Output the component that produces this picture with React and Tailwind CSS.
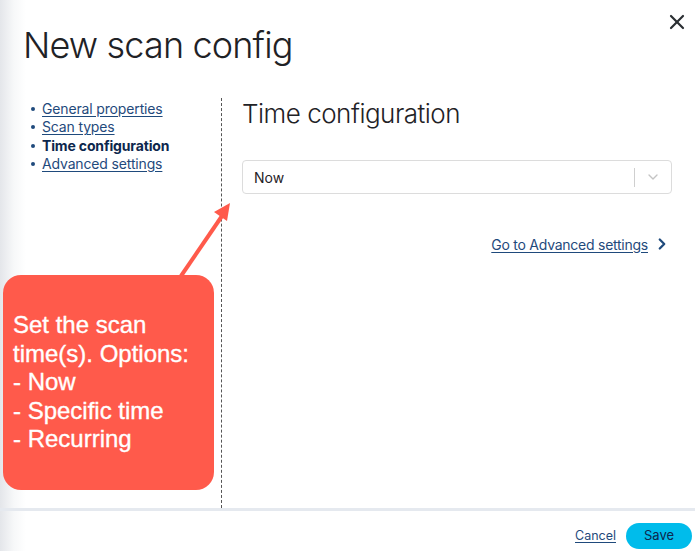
import { X, ChevronDown, ChevronRight } from "lucide-react"

const navItems = [
	{ label: "General properties", active: false },
	{ label: "Scan types", active: false },
	{ label: "Time configuration", active: true },
	{ label: "Advanced settings", active: false },
]

const App = () => {
	return (
		<div
			className="relative w-[695px] h-[551px] flex flex-col overflow-hidden bg-[linear-gradient(to_right,#e4e6ea,#f7f8f9_14px,#ffffff_26px)]"
			style={{ fontFamily: "Inter, 'Noto Sans', sans-serif" }}
		>
			{/* HEADER */}
			<div className="h-[98px] flex justify-between items-start">
				<h1 className="mt-[23px] ml-[23px] text-[36px] leading-[44px] font-light text-[#1f2226] tracking-[-0.85px]">
					New scan config
				</h1>
				<button className="mt-[10px] mr-[6px] text-[#2b2f33]">
					<X size={24} strokeWidth={2.2} />
				</button>
			</div>

			{/* BODY */}
			<div className="h-[410px] flex">

				{/* LEFT NAV */}
				<div className="w-[222px] flex flex-col border-r border-dashed border-[#555]">
					<ul className="pt-[2px] pl-[31px] text-[14px] leading-[18.3px] tracking-[-0.15px]">
						{navItems.map(item => (
							<li key={item.label} className="flex items-center gap-[7px]">
								<span className="w-[4px] h-[4px] rounded-full bg-[#1f4a7c]" />
								{item.active ? (
									<span className="font-bold text-[#0d274d]">{item.label}</span>
								) : (
									<a className="underline underline-offset-[2px] text-[#1f4a7c]">{item.label}</a>
								)}
							</li>
						))}
					</ul>

					{/* CALLOUT */}
					<div className="mt-auto mb-[18px] ml-[3px] w-[211px] h-[215px] rounded-[18px] bg-[#ff5a4b] flex flex-col justify-center pl-[10px]">
						<p
							className="text-white text-[24px] leading-[28.5px] [-webkit-text-stroke:0.35px_white]"
							style={{ fontFamily: "'Liberation Sans', Arial, sans-serif" }}
						>
							Set the scan<br />
							time(s). Options:<br />
							- Now<br />
							- Specific time<br />
							- Recurring
						</p>
					</div>
				</div>

				{/* RIGHT CONTENT */}
				<div className="flex-1 pl-[20px] pr-[23px]">
					<h2 className="text-[26px] leading-[32px] font-light text-[#1f2226] tracking-[-0.5px]">
						Time configuration
					</h2>

					<div className="mt-[30px] h-[34px] flex items-center border border-[#dcdcdc] rounded-[4px] bg-white">
						<span className="flex-1 pl-[11px] text-[14px] text-[#1f2226]">Now</span>
						<span className="w-px h-[19px] bg-[#cfcfcf]" />
						<span className="w-[36px] flex justify-center text-[#c4c4c4]">
							<ChevronDown size={16} strokeWidth={2} />
						</span>
					</div>

					<div className="mt-[40px] h-[20px] flex justify-end items-center pr-[1px] gap-[5px]">
						<a className="text-[14px] underline underline-offset-[2px] text-[#1f4a7c] tracking-[-0.25px]">
							Go to Advanced settings
						</a>
						<ChevronRight size={18} strokeWidth={3} className="text-[#1f4a7c]" />
					</div>
				</div>
			</div>

			{/* FOOTER */}
			<div className="flex-1 border-t-[3px] border-[#e5e9ef] flex justify-end items-start pt-[12px] pr-[3px] gap-[10px]">
				<a className="mt-[4px] text-[12.5px] underline underline-offset-[2px] text-[#1f4a7c]">Cancel</a>
				<button className="h-[26px] w-[66px] rounded-full bg-[#00bceb] text-[13px] text-[#0d274d]">
					Save
				</button>
			</div>

			{/* ARROW */}
			<svg className="absolute left-0 top-0 pointer-events-none" width="695" height="551">
				<line x1="181" y1="276" x2="222" y2="216" stroke="#ff5a4b" strokeWidth="4" />
				<polygon points="230,203 227,221 214,212" fill="#ff5a4b" />
			</svg>
		</div>
	)
}

export default App
